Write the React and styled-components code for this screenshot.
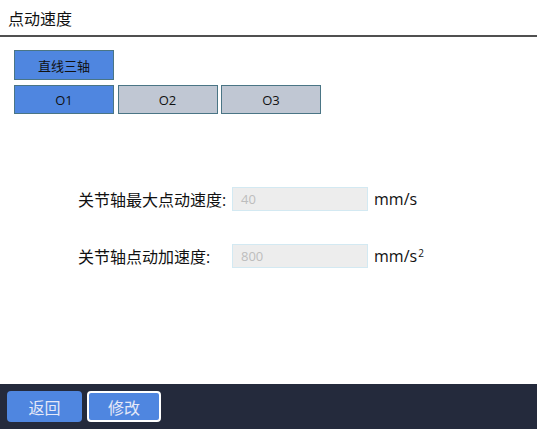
import React from "react";
import styled, { createGlobalStyle } from "styled-components";

const Global = createGlobalStyle`
  html, body { margin: 0; padding: 0; background: #fff; }
  body { font-family: "Open Sans", "Noto Sans CJK SC", sans-serif; }
  #root { width: 537px; height: 429px; }
`;

const Page = styled.div`
  width: 537px;
  height: 429px;
  display: flex;
  flex-direction: column;
  background: #fff;
  color: #111;
`;

const Header = styled.div`
  height: 35px;
  display: flex;
  align-items: center;
  padding-left: 8px;
  font-size: 16px;
  border-bottom: 2px solid #505050;
  font-family: "Noto Sans CJK SC", sans-serif;
`;

const Content = styled.div`
  flex: 1;
  padding: 13px 14px 0;
  display: flex;
  flex-direction: column;
`;

const TabRow = styled.div`
  display: flex;
  gap: 3.5px;
  margin-bottom: ${(p) => p.$mb || 0}px;
`;

const Tab = styled.button`
  width: 100px;
  height: ${(p) => p.$h}px;
  box-sizing: border-box;
  border: 1px solid #4a7585;
  background: ${(p) => (p.$active ? "#4f86e0" : "#c0c7d3")};
  color: #111;
  font-family: "Open Sans", "Noto Sans CJK SC", sans-serif;
  font-size: 13px;
  padding: 0;
  display: flex;
  align-items: center;
  justify-content: center;
`;

const Form = styled.div`
  margin-top: 73px;
  padding-left: 64px;
  display: flex;
  flex-direction: column;
  gap: 33px;
`;

const Row = styled.div`
  display: flex;
  align-items: center;
  height: 24px;
`;

const Label = styled.div`
  width: 154px;
  font-size: 16px;
  font-family: "Open Sans", "Noto Sans CJK SC", sans-serif;
  color: #111;
`;

const Input = styled.div`
  width: 136px;
  height: 24px;
  box-sizing: border-box;
  border: 1px solid #d3e9f2;
  background: #ededed;
  color: #bdbdbd;
  font-size: 13px;
  padding-left: 8px;
  display: flex;
  align-items: center;
`;

const Unit = styled.div`
  margin-left: 6px;
  font-size: 16px;
  color: #111;
  sup { font-size: 10px; vertical-align: 5px; line-height: 0; margin-left: 1px; }
`;

const Footer = styled.div`
  height: 45px;
  background: #242a3c;
  display: flex;
  align-items: center;
  padding: 0 7px;
  gap: 5px;
`;

const FootButton = styled.button`
  width: ${(p) => p.$w}px;
  height: 31px;
  box-sizing: border-box;
  border-radius: 4px;
  border: ${(p) => (p.$outlined ? "2px solid #fff" : "none")};
  background: #4f86e0;
  color: #e6e9f8;
  font-family: "Noto Sans CJK SC", sans-serif;
  font-size: 16px;
  padding: 0;
  display: flex;
  align-items: center;
  justify-content: center;
`;

export default function App() {
  return (
    <Page>
      <Global />
      <Header>点动速度</Header>
      <Content>
        <TabRow $mb={5}>
          <Tab $h={30} $active>直线三轴</Tab>
        </TabRow>
        <TabRow>
          <Tab $h={29} $active>O1</Tab>
          <Tab $h={29}>O2</Tab>
          <Tab $h={29}>O3</Tab>
        </TabRow>
        <Form>
          <Row>
            <Label>关节轴最大点动速度:</Label>
            <Input>40</Input>
            <Unit>mm/s</Unit>
          </Row>
          <Row>
            <Label>关节轴点动加速度:</Label>
            <Input>800</Input>
            <Unit>mm/s<sup>2</sup></Unit>
          </Row>
        </Form>
      </Content>
      <Footer>
        <FootButton $w={75}>返回</FootButton>
        <FootButton $w={74} $outlined>修改</FootButton>
      </Footer>
    </Page>
  );
}
